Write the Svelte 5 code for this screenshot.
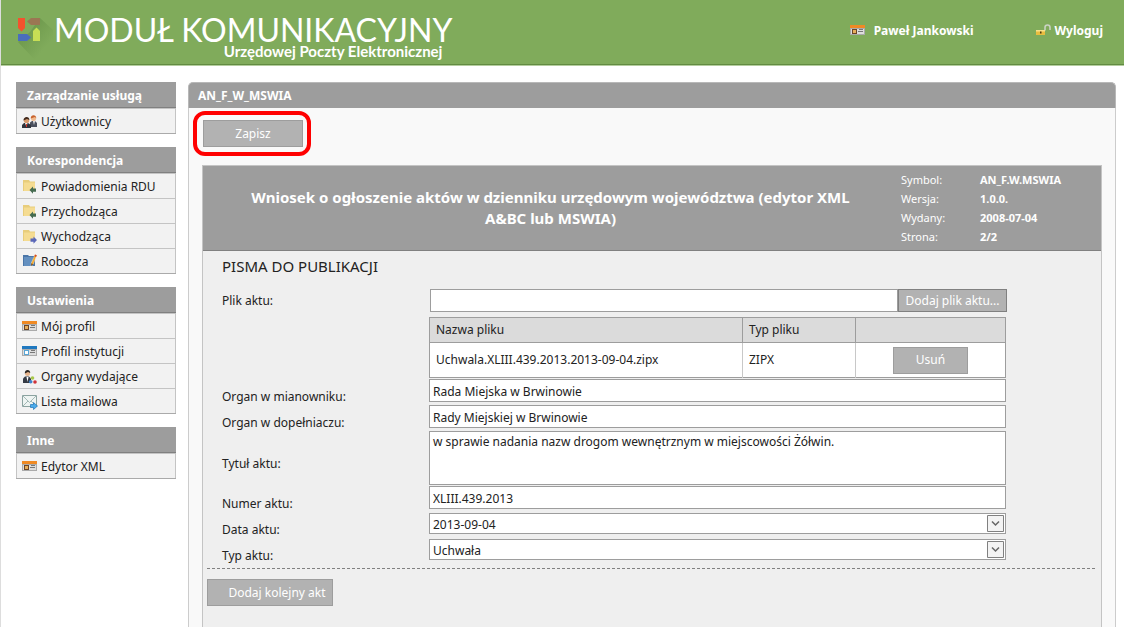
<script>
  const menu = [
    {
      title: 'Zarządzanie usługą',
      items: [{ label: 'Użytkownicy', icon: 'users' }]
    },
    {
      title: 'Korespondencja',
      items: [
        { label: 'Powiadomienia RDU', icon: 'folder-in' },
        { label: 'Przychodząca', icon: 'folder-in' },
        { label: 'Wychodząca', icon: 'folder-out' },
        { label: 'Robocza', icon: 'draft' }
      ]
    },
    {
      title: 'Ustawienia',
      items: [
        { label: 'Mój profil', icon: 'card' },
        { label: 'Profil instytucji', icon: 'card-blue' },
        { label: 'Organy wydające', icon: 'organs' },
        { label: 'Lista mailowa', icon: 'mail' }
      ]
    },
    {
      title: 'Inne',
      items: [{ label: 'Edytor XML', icon: 'card' }]
    }
  ];

  const meta = [
    ['Symbol:', 'AN_F.W.MSWIA'],
    ['Wersja:', '1.0.0.'],
    ['Wydany:', '2008-07-04'],
    ['Strona:', '2/2']
  ];

  let files = $state([{ name: 'Uchwala.XLIII.439.2013.2013-09-04.zipx', type: 'ZIPX' }]);

  let act = $state({
    file: '',
    organ: 'Rada Miejska w Brwinowie',
    organGenitive: 'Rady Miejskiej w Brwinowie',
    title: 'w sprawie nadania nazw drogom wewnętrznym w miejscowości Żółwin.',
    number: 'XLIII.439.2013',
    date: '2013-09-04',
    type: 'Uchwała'
  });

  function removeFile(file) {
    files = files.filter((f) => f !== file);
  }
</script>

{#snippet icon(name)}
  <svg class="icon" width="16" height="16" viewBox="0 0 16 16" aria-hidden="true">
    {#if name === 'users'}
      <path d="M8 13V8.500l2-1.500h3l2 2V13z" fill="#4a4f5c" />
      <path d="M11 7l1 4 1-4z" fill="#eee" />
      <circle cx="11.500" cy="4.500" r="2.500" fill="#f0b98c" />
      <path d="M8.700 4.500C8.500 0 14.500 0 14.300 4.500L13 3z" fill="#c8622c" />
      <path d="M0 14v-3l2-2h4l3 2v3z" fill="#30343c" />
      <path d="M3 9h2.500L4.500 13z" fill="#fff" />
      <path d="M4 10h1v3H4z" fill="#d8342a" />
      <circle cx="4.500" cy="6.500" r="2.700" fill="#d99b6c" />
      <path d="M1.500 6.500C1.300 1.800 7.700 1.800 7.400 6L5 5z" fill="#40281c" />
    {:else if name === 'folder-in' || name === 'folder-out'}
      <path d="M1 1h6l1 1.500h5V12H1z" fill="#e8cd7c" />
      <path d="M2 3.500h11V12H2z" fill="#f5dc92" />
      {#if name === 'folder-in'}
        <path d="M7.500 11L11 7.500v2h3v3.200h-3v2z" fill="#456b50" />
      {:else}
        <path d="M15 11l-3.500-3.500v2H8.500v3.200h3v2z" fill="#5a67b8" />
      {/if}
    {:else if name === 'draft'}
      <path d="M1 1h5l1 1h6v10H1z" fill="#4b76a8" />
      <path d="M2 3h9v9H2z" fill="#6490c0" />
      <path d="M13 .5l1.800.7-3.600 9-2.100 1.800.1-2.700z" fill="#f7a928" stroke="#f3f3f3" stroke-width=".4" />
      <path d="M13 .5l1.800.7-.7 1.700-1.800-.7z" fill="#d24c2c" />
      <path d="M9.200 9.300l2 .9-2.100 1.800z" fill="#6b4a24" />
    {:else if name === 'card' || name === 'card-blue'}
      <path d="M0 2h15v10H0z" fill="#aaa" />
      <path d="M1 6h13v5H1z" fill="#ddd" />
      <path d="M0 2h15v3H0z" fill={name === 'card' ? '#f08a24' : '#1f78bf'} />
      <path d="M2 6h5v5H2z" fill={name === 'card' ? '#6d4526' : '#5aa6d6'} />
      <path d="M3 7h3v3H3z" fill={name === 'card' ? '#e8ae5c' : '#fff'} />
      <path d="M9 6h4v1H9zM8 8h5v1H8z" fill="#777" />
    {:else if name === 'organs'}
      <path d="M1 14V9.500L3 7.500h4l2 2V14z" fill="#353a44" />
      <path d="M4.500 8h2l-1 5z" fill="#fff" />
      <circle cx="5.500" cy="4.500" r="2.500" fill="#e8b58c" />
      <path d="M2.800 4.500C2.500 0 8.500 0 8.200 4L6 3z" fill="#2c2622" />
      <circle cx="10.500" cy="9" r="1.800" fill="#a8c84a" />
      <circle cx="8.700" cy="12.800" r="1.800" fill="#3f83cc" />
      <circle cx="13" cy="13" r="1.800" fill="#d0333b" />
    {:else if name === 'mail'}
      <path d="M.5 1.500h14v11H.5z" fill="#eef4f2" stroke="#8ba3a0" />
      <path d="M1 2l6.500 6.500L14 2M1 12l5-5M14 12l-5-5" fill="none" stroke="#a3b8b5" />
      <path d="M8.500 10.500h3v-2l4 3.500-4 3.500v-2h-3z" fill="#4aabea" stroke="#1d72b8" stroke-width=".7" />
    {:else if name === 'lock'}
      <path d="M9 7.500V4.500a2.500 2.500 0 0 1 5 0V7" fill="none" stroke="#c9d2c2" stroke-width="1.600" />
      <path d="M0 7h9v5H0z" fill="#e9bd3f" />
      <path d="M0 7h9v1.500H0z" fill="#f8e08a" />
      <path d="M4 8.500h1.500v2H4z" fill="#4d3b12" />
    {/if}
  </svg>
{/snippet}

{#snippet arrow()}
  <svg class="arrow" width="17" height="17" viewBox="0 0 17 17" aria-hidden="true">
    <path d="M.5.5h16v16H.5z" fill="#f3f3f3" stroke="#808080" />
    <path d="M5 6.500l3.500 3.500L12 6.500" fill="none" stroke="#666" stroke-width="1.500" />
  </svg>
{/snippet}

<div class="page">
  <header class="top">
    <a class="brand" href="#start">
      <svg class="logo" width="37" height="42" viewBox="0 0 37 42" aria-hidden="true">
        <defs>
          <linearGradient id="shade" x1="0" y1="0" x2="1" y2="1">
            <stop offset=".3" stop-color="#5f8a41" stop-opacity=".5" />
            <stop offset=".75" stop-color="#5f8a41" stop-opacity="0" />
          </linearGradient>
        </defs>
        <path d="M24 1l13 12v29H18L2 25l12-10z" fill="url(#shade)" />
        <path d="M2 1h7v10l-3.500 3.500L2 11z" fill="#f4522d" />
        <path d="M15 1h9v7h-9l-4-3.500z" fill="#9b7653" />
        <path d="M2 17h9l4 3.500-4 3.500H2z" fill="#4a6ebd" />
        <path d="M17 14l3.500-3.500L24 14v10h-7z" fill="#c8de55" />
      </svg>
      <span class="name">
        <span class="big">MODUŁ KOMUNIKACYJNY</span>
        <span class="small">Urzędowej Poczty Elektronicznej</span>
      </span>
    </a>
    <nav class="account">
      <a class="user" href="#profil">{@render icon('card')}Paweł Jankowski</a>
      <a class="logout" href="#wyloguj">{@render icon('lock')}Wyloguj</a>
    </nav>
  </header>

  <div class="columns">
    <aside>
      {#each menu as group}
        <section class="box">
          <h2>{group.title}</h2>
          <ul>
            {#each group.items as item}
              <li><a href="#menu">{@render icon(item.icon)}{item.label}</a></li>
            {/each}
          </ul>
        </section>
      {/each}
    </aside>

    <main>
      <h1>AN_F_W_MSWIA</h1>
      <div class="content">
        <div class="save">
          <button type="button" class="btn wide">Zapisz</button>
        </div>

        <form class="form">
          <div class="form-head">
            <h2>Wniosek o ogłoszenie aktów w dzienniku urzędowym województwa (edytor XML A&amp;BC lub MSWIA)</h2>
            <dl>
              {#each meta as [key, value]}
                <dt>{key}</dt>
                <dd>{value}</dd>
              {/each}
            </dl>
          </div>

          <div class="fields">
            <h3>PISMA DO PUBLIKACJI</h3>

            <div class="row file">
              <label for="file">Plik aktu:</label>
              <div class="upload">
                <input id="file" type="text" bind:value={act.file} />
                <button type="button" class="btn attach">Dodaj plik aktu...</button>
              </div>
            </div>

            <table>
              <thead>
                <tr>
                  <th class="col-name">Nazwa pliku</th>
                  <th class="col-type">Typ pliku</th>
                  <th></th>
                </tr>
              </thead>
              <tbody>
                {#each files as file}
                  <tr>
                    <td>{file.name}</td>
                    <td>{file.type}</td>
                    <td class="action">
                      <button type="button" class="btn" onclick={() => removeFile(file)}>Usuń</button>
                    </td>
                  </tr>
                {/each}
              </tbody>
            </table>

            <div class="row">
              <label for="organ">Organ w mianowniku:</label>
              <input id="organ" type="text" bind:value={act.organ} />
            </div>
            <div class="row">
              <label for="organ-genitive">Organ w dopełniaczu:</label>
              <input id="organ-genitive" type="text" bind:value={act.organGenitive} />
            </div>
            <div class="row tall">
              <label for="title">Tytuł aktu:</label>
              <textarea id="title" bind:value={act.title}></textarea>
            </div>
            <div class="row">
              <label for="number">Numer aktu:</label>
              <input id="number" type="text" bind:value={act.number} />
            </div>
            <div class="row">
              <label for="date">Data aktu:</label>
              <div class="select">
                <select id="date" bind:value={act.date}>
                  <option>2013-09-04</option>
                </select>
                {@render arrow()}
              </div>
            </div>
            <div class="row">
              <label for="type">Typ aktu:</label>
              <div class="select">
                <select id="type" bind:value={act.type}>
                  <option>Uchwała</option>
                </select>
                {@render arrow()}
              </div>
            </div>
          </div>

          <div class="more">
            <button type="button" class="btn add">Dodaj kolejny akt</button>
          </div>
        </form>
      </div>
    </main>
  </div>
</div>

<style>
  :global(body) {
    background: #fff;
    color: #222;
    font: 12px/16px 'Noto Sans', 'Open Sans', sans-serif;
  }

  * {
    box-sizing: border-box;
  }

  h1, h2, h3, ul, dl, dd {
    margin: 0;
    padding: 0;
  }

  ul {
    list-style: none;
  }

  a {
    color: inherit;
    text-decoration: none;
  }

  input, textarea, select, button {
    margin: 0;
    font: inherit;
    color: inherit;
  }

  .icon {
    flex: none;
  }

  .page {
    display: flex;
    flex-direction: column;
    min-height: 100vh;
    border-left: 1px solid #ddd;
  }

  /* header */

  .top {
    display: flex;
    justify-content: space-between;
    height: 66px;
    padding: 0 21px 0 15px;
    background: #80ab5b;
    border-bottom: 1px solid #b4cd9e;
    box-shadow: inset 0 -1px #628b42;
    color: #fff;
  }

  .brand {
    display: flex;
    gap: 1px;
    padding-top: 17px;
  }

  .name {
    display: flex;
    flex-direction: column;
    align-items: flex-end;
    font-family: Lato, sans-serif;
    white-space: nowrap;
  }

  .big {
    font-size: 32px;
    line-height: 25px;
  }

  .small {
    padding-right: 10px;
    font-size: 15px;
    font-weight: bold;
    line-height: 18px;
  }

  .account {
    display: flex;
    align-items: center;
    gap: 62px;
    padding-bottom: 4px;
    font-weight: bold;
  }

  .account a {
    display: flex;
    align-items: center;
  }

  .user {
    gap: 8px;
  }

  .logout {
    gap: 3px;
  }

  /* side menu */

  .columns {
    display: flex;
    flex: 1;
    gap: 12px;
    padding: 16px 8px 0 15px;
  }

  aside {
    display: flex;
    flex: none;
    flex-direction: column;
    gap: 13px;
    width: 160px;
  }

  .box {
    background: #f2f2f2;
    border-bottom: 1px solid #aaa;
  }

  .box h2 {
    height: 26px;
    padding-left: 11px;
    background: #9d9d9d;
    border-bottom: 1px solid #808080;
    color: #fff;
    font-size: 12px;
    line-height: 27px;
  }

  .box li {
    border: 1px solid #c4c4c4;
    border-bottom: 0;
  }

  .box a {
    display: flex;
    align-items: center;
    gap: 3px;
    height: 24px;
    padding: 2px 0 0 5px;
  }

  /* content */

  main {
    display: flex;
    flex: 1;
    flex-direction: column;
    min-width: 0;
  }

  h1 {
    height: 26px;
    padding-left: 9px;
    background: #9d9d9d;
    border: 1px solid #b8b8b8;
    border-bottom: 0;
    border-radius: 5px 5px 0 0;
    color: #fff;
    font-size: 12px;
    line-height: 26px;
  }

  .content {
    display: flex;
    flex: 1;
    flex-direction: column;
    padding: 12px 13px 0 13px;
    background: #f9f9f9;
    border: 1px solid #ccc;
    border-width: 0 1px;
  }

  .btn {
    height: 27px;
    padding: 0;
    background: #b2b2b2;
    border: 1px solid #9d9d9d;
    border-radius: 0;
    color: #fff;
    white-space: nowrap;
  }

  .save {
    position: relative;
    align-self: flex-start;
    margin: 0 0 18px 1px;
  }

  .wide {
    display: block;
    width: 100px;
  }

  /* highlight around the save button */
  .save::after {
    position: absolute;
    inset: -9px -8px -9px -10px;
    border: 4px solid #f00;
    border-radius: 12px;
    content: '';
    pointer-events: none;
  }

  .form {
    flex: 1;
    background: #efefef;
    border: 1px solid #c4c4c4;
    border-bottom: 0;
  }

  .form-head {
    display: flex;
    align-items: center;
    gap: 3px;
    height: 85px;
    background: #9d9d9d;
    border-bottom: 1px solid #808080;
    color: #fff;
  }

  .form-head h2 {
    flex: 1;
    padding: 0 36px;
    font-size: 15px;
    line-height: 21px;
    text-align: center;
  }

  dl {
    display: grid;
    grid-template-columns: 79px 1fr;
    width: 200px;
    font-size: 11px;
    line-height: 19px;
  }

  dd {
    font-weight: bold;
  }

  .fields {
    padding: 5px 95px 4px 19px;
  }

  h3 {
    margin-bottom: 13px;
    font-size: 15px;
    font-weight: normal;
    line-height: 20px;
  }

  .row {
    display: grid;
    grid-template-columns: 207px 1fr;
    min-height: 26px;
  }

  .row label {
    align-self: center;
    padding-top: 10px;
  }

  .file label {
    padding: 0;
  }

  .tall {
    min-height: 55px;
  }

  .file {
    min-height: 23px;
    margin-bottom: 5px;
  }

  .row input, .row textarea, .row select {
    width: 100%;
    height: 23px;
    padding: 1px 3px 0;
    background: #fff;
    border: 1px solid #9d9d9d;
    border-radius: 0;
    outline: 0;
  }

  .row textarea {
    display: block;
    height: 54px;
    padding: 2px 3px;
    resize: none;
  }

  .upload {
    display: flex;
    margin: 0 -1px 0 1px;
  }

  .upload .attach {
    flex: none;
    width: 109px;
    height: 23px;
    border-color: #808080;
  }

  .select {
    position: relative;
    padding-top: 1px;
  }

  .row select {
    display: block;
    height: 21px;
    padding-top: 2px;
    appearance: none;
  }

  .arrow {
    position: absolute;
    top: 3px;
    right: 2px;
    pointer-events: none;
  }

  table {
    width: calc(100% - 207px);
    margin: 0 0 1px 207px;
    background: #fff;
    border: 1px solid #9d9d9d;
    border-collapse: collapse;
    table-layout: fixed;
  }

  th, td {
    padding: 0 6px;
    border-left: 1px solid #c8c8c8;
    text-align: left;
  }

  th {
    height: 25px;
    background: #dbdbdb;
    border: 1px solid #9d9d9d;
    font-weight: normal;
  }

  td {
    height: 35px;
  }

  td:first-child {
    border-left-color: #9d9d9d;
  }

  .col-name {
    width: 313px;
  }

  .col-type {
    width: 113px;
  }

  .action {
    text-align: center;
  }

  .action .btn {
    width: 75px;
  }

  .more {
    margin: 0 6px 0 4px;
    padding-top: 10px;
    border-top: 1px dashed #808080;
  }

  .add {
    width: 126px;
    padding: 0 4px 0 18px;
  }
</style>
